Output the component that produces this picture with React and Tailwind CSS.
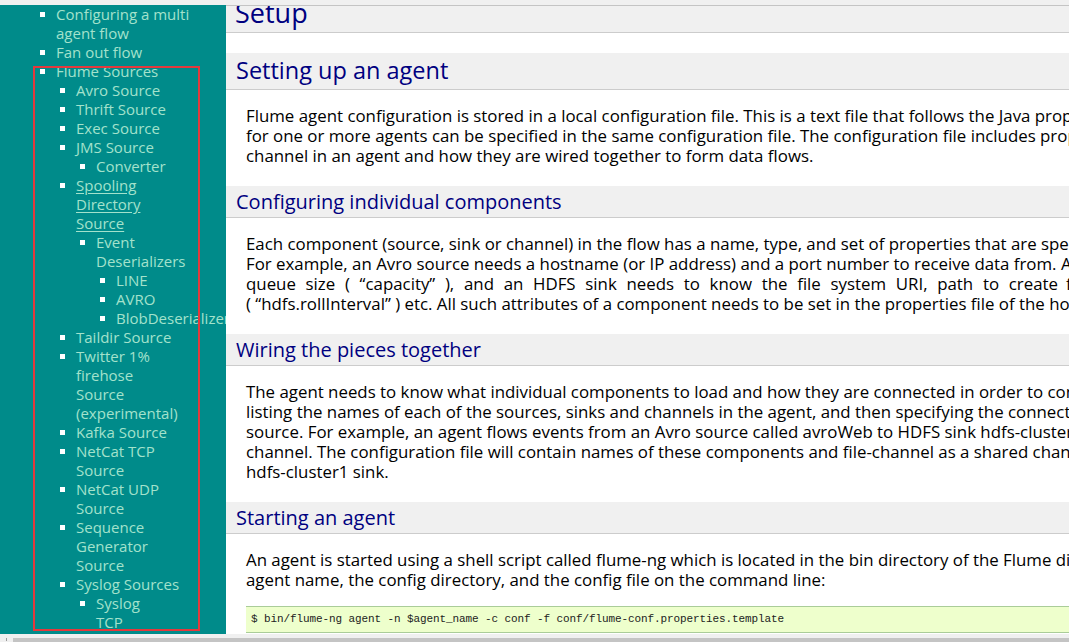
import React from 'react';

const nav = [
  { label: ['Configuring a multi', 'agent flow'] },
  { label: ['Fan out flow'] },
  {
    label: ['Flume Sources'],
    children: [
      { label: ['Avro Source'] },
      { label: ['Thrift Source'] },
      { label: ['Exec Source'] },
      { label: ['JMS Source'], children: [{ label: ['Converter'] }] },
      {
        label: ['Spooling', 'Directory', 'Source'],
        link: true,
        children: [
          {
            label: ['Event', 'Deserializers'],
            children: [{ label: ['LINE'] }, { label: ['AVRO'] }, { label: ['BlobDeserializer'] }],
          },
        ],
      },
      { label: ['Taildir Source'] },
      { label: ['Twitter 1%', 'firehose', 'Source', '(experimental)'] },
      { label: ['Kafka Source'] },
      { label: ['NetCat TCP', 'Source'] },
      { label: ['NetCat UDP', 'Source'] },
      { label: ['Sequence', 'Generator', 'Source'] },
      { label: ['Syslog Sources'], children: [{ label: ['Syslog', 'TCP'] }] },
    ],
  },
];

const NavList = ({ items }) => (
  <ul className="pl-[20px]">
    {items.map((item, i) => (
      <li key={i} className="relative">
        <span className="absolute left-[-16px] top-[7px] w-[5px] h-[5px] bg-white" />
        <div className={`whitespace-nowrap ${item.link ? 'underline underline-offset-2' : ''}`}>
          {item.label.map((line, j) => (
            <div key={j}>{line}</div>
          ))}
        </div>
        {item.children && <NavList items={item.children} />}
      </li>
    ))}
  </ul>
);

const Heading = ({ children }) => (
  <div className="h-[32px] bg-[#f0f0f0] border-b border-[#cccccc] flex items-center pl-[10px] text-[20px] text-[#000080] whitespace-nowrap">
    {children}
  </div>
);

const Para = ({ lines }) => (
  <div className="mt-[16px] mb-[20px] pl-[20px] leading-[20px] text-[16.85px] text-black">
    {lines.map((l, i) => (
      <div key={i} className="whitespace-nowrap">{l}</div>
    ))}
  </div>
);

export default function App() {
  return (
    <div
      className="h-[642px] w-[1069px] overflow-hidden bg-[#f0f0f0] flex flex-col"
      style={{ fontFamily: '"Open Sans", "Noto Sans", sans-serif' }}
    >
      <div className="h-[5px] shrink-0" />
      <div className="flex h-[629px] shrink-0">
        <aside className="relative w-[226px] shrink-0 overflow-hidden bg-[#008b8a] text-[15px] leading-[19px] text-[#a3e2cc]">
          <div className="pl-[36px]">
            <NavList items={nav} />
          </div>
          <div className="absolute left-[33px] top-[61px] w-[167px] h-[565px] border-2 border-[#e4393c]" />
        </aside>
        <main className="flex-1 min-w-0 overflow-hidden bg-white border-t border-[#c4c4c4]">
          <div className="h-[27px] bg-[#f0f0f0] border-b border-[#cccccc] overflow-hidden pl-[9px]">
            <div className="mt-[-10px] text-[27px] leading-[34px] text-[#000080]">Setup</div>
          </div>
          <div className="h-[20px]" />
          <div className="h-[37px] bg-[#f0f0f0] border-b border-[#cccccc] flex items-center pl-[10px] text-[23.5px] text-[#000080]">
            Setting up an agent
          </div>
          <Para
            lines={[
              'Flume agent configuration is stored in a local configuration file. This is a text file that follows the Java properties file format.',
              'for one or more agents can be specified in the same configuration file. The configuration file includes properties of each source, sink and',
              'channel in an agent and how they are wired together to form data flows.',
            ]}
          />
          <Heading>Configuring individual components</Heading>
          <div className="mt-[16px] mb-[20px] pl-[20px] leading-[20px] text-[16.85px] text-black">
            <div className="whitespace-nowrap">
              Each component (source, sink or channel) in the flow has a name, type, and set of properties that are specific to the type and instantiation.
            </div>
            <div className="whitespace-nowrap">
              For example, an Avro source needs a hostname (or IP address) and a port number to receive data from. A memory channel can have max
            </div>
            <div className="flex whitespace-nowrap">
              <div className="w-[812px] shrink-0 [text-align-last:justify]">
                queue size ( “capacity” ), and an HDFS sink needs to know the file system URI, path to create
              </div>
              <div className="pl-[8px]">files, frequency of file rotation</div>
            </div>
            <div className="whitespace-nowrap">
              ( “hdfs.rollInterval” ) etc. All such attributes of a component needs to be set in the properties file of the hosting Flume agent.
            </div>
          </div>
          <Heading>Wiring the pieces together</Heading>
          <Para
            lines={[
              'The agent needs to know what individual components to load and how they are connected in order to constitute the flow. This is done by',
              'listing the names of each of the sources, sinks and channels in the agent, and then specifying the connecting channel for each sink and',
              'source. For example, an agent flows events from an Avro source called avroWeb to HDFS sink hdfs-cluster1 via a file channel called file-',
              'channel. The configuration file will contain names of these components and file-channel as a shared channel for both avroWeb source and',
              'hdfs-cluster1 sink.',
            ]}
          />
          <Heading>Starting an agent</Heading>
          <div className="mt-[16px] pl-[20px] leading-[20px] text-[16.85px] text-black">
            <div className="whitespace-nowrap">
              An agent is started using a shell script called flume-ng which is located in the bin directory of the Flume distribution. You need to specify the
            </div>
            <div className="whitespace-nowrap">agent name, the config directory, and the config file on the command line:</div>
          </div>
          <div className="mt-[16px] ml-[20px] h-[27px] bg-[#eeffcc] border-y border-[#aacc99] pl-[5px] flex items-center whitespace-nowrap text-[11px] tracking-[-0.1px] text-[#222]" style={{ fontFamily: '"Liberation Mono", monospace' }}>
            $ bin/flume-ng agent -n $agent_name -c conf -f conf/flume-conf.properties.template
          </div>
        </main>
      </div>
      <div className="h-[8px] shrink-0 flex">
        <div className="w-[13px] shrink-0 flex items-end justify-center pb-[1px]">
          <div className="w-[1px] h-[3px] bg-[#9a9a9a]" />
        </div>
        <div className="flex-1 mt-[4px] bg-[#c4c4c4]" />
      </div>
    </div>
  );
}
